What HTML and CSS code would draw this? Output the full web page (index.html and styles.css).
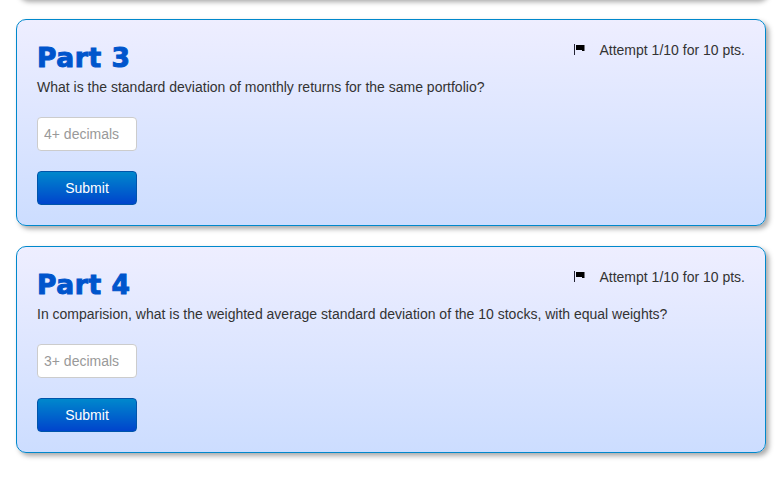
FILE: index.html
```html
<!DOCTYPE html>
<html lang="en">
<head>
<meta charset="utf-8">
<title>Quiz</title>
<link rel="stylesheet" href="styles.css">
</head>
<body>
<div class="stack">
  <section class="card stub"></section>
  <section class="card">
    <div class="attempt">
      <svg class="flag" width="12" height="12" viewBox="0 0 12 12"><path class="pole" d="M0.5 0V11"/><path d="M2 1H10.5V7H8V6H2Z"/></svg>
      <span>Attempt 1/10 for 10 pts.</span>
    </div>
    <h2 class="title">Part 3</h2>
    <p class="question">What is the standard deviation of monthly returns for the same portfolio?</p>
    <input class="answer" type="text" placeholder="4+ decimals">
    <button class="submit" type="button">Submit</button>
  </section>
  <section class="card">
    <div class="attempt">
      <svg class="flag" width="12" height="12" viewBox="0 0 12 12"><path class="pole" d="M0.5 0V11"/><path d="M2 1H10.5V7H8V6H2Z"/></svg>
      <span>Attempt 1/10 for 10 pts.</span>
    </div>
    <h2 class="title">Part 4</h2>
    <p class="question">In comparision, what is the weighted average standard deviation of the 10 stocks, with equal weights?</p>
    <input class="answer" type="text" placeholder="3+ decimals">
    <button class="submit" type="button">Submit</button>
  </section>
</div>
</body>
</html>
```
FILE: styles.css
```css
* { box-sizing: border-box; }
html, body { margin: 0; padding: 0; background: #fff; overflow: hidden; }
body { height: 492px; font-family: "Liberation Sans", Arial, sans-serif; font-size: 14px; color: #333; }
.stack { display: flex; flex-direction: column; gap: 20px; padding: 0 13px 0 16px; margin-top: -21px; }
.card {
  display: flex; flex-direction: column; align-items: flex-start;
  height: 207px; padding: 20px;
  border: 1px solid #0088cc; border-radius: 10px;
  background: linear-gradient(#eeeeff, #ccddff);
  box-shadow: 3px 3px 5px #aaa;
}
.stub { height: 20px; padding: 0; }
.attempt { align-self: flex-end; display: flex; align-items: center; gap: 13px; height: 20px; margin: 0 0 -20px; line-height: 20px; }
.flag { display: block; margin-top: 0; }
.flag path { fill: #000; }
.flag .pole { fill: none; stroke: #223; stroke-width: 1; }
.title {
  margin: 0; height: 37px; line-height: 35px;
  font-family: "DejaVu Sans", "Liberation Sans", sans-serif; font-size: 26.5px; font-weight: 700;
  letter-spacing: 0.6px; color: #0055cc; -webkit-text-stroke: 1px #0055cc;
}
.question { margin: 0; height: 20px; line-height: 20px; white-space: nowrap; }
.answer {
  width: 100px; height: 34px; margin-top: 20px; padding: 0 6px;
  border: 1px solid #ccc; border-radius: 4px; background: #fff;
  font: 14px "Liberation Sans", Arial, sans-serif; color: #333;
}
.answer::placeholder { color: #999; opacity: 1; }
.submit {
  width: 100px; height: 34px; margin-top: 20px; padding: 0;
  border: 1px solid #0055aa; border-radius: 4px;
  background: linear-gradient(#0088cc, #0044cc);
  font: 14px "Liberation Sans", Arial, sans-serif; color: #fff;
}
```
